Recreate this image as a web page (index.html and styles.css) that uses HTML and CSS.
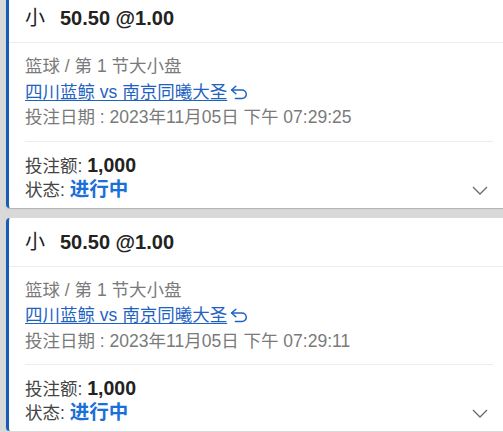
FILE: index.html
```html
<!DOCTYPE html>
<html lang="zh">
<head>
<meta charset="utf-8">
<link rel="stylesheet" href="styles.css">
</head>
<body>
<div class="list">
  <div class="card">
    <div class="card-head"><span class="side">小</span><span class="line">50.50 @1.00</span></div>
    <div class="card-body">
      <div class="meta">篮球 / 第 1 节大小盘</div>
      <div class="match"><a class="link">四川蓝鲸 vs 南京同曦大圣</a><svg class="ret" width="18" height="15" viewBox="0 0 18 15"><path d="M5.8 1.2 L1.6 5 L5.8 8.8" /><path d="M1.9 5 H12 A4.3 4.3 0 0 1 12 13.6 H5.4" /></svg></div>
      <div class="meta">投注日期 : 2023年11月05日 下午 07:29:25</div>
    </div>
    <div class="card-foot">
      <div class="rows">
        <div class="row">投注额: <b class="amt">1,000</b></div>
        <div class="row">状态: <b class="status">进行中</b></div>
      </div>
      <svg class="chev" width="16" height="9" viewBox="0 0 16 9"><path d="M1 1 L8 8 L15 1" /></svg>
    </div>
  </div>
  <div class="card">
    <div class="card-head"><span class="side">小</span><span class="line">50.50 @1.00</span></div>
    <div class="card-body">
      <div class="meta">篮球 / 第 1 节大小盘</div>
      <div class="match"><a class="link">四川蓝鲸 vs 南京同曦大圣</a><svg class="ret" width="18" height="15" viewBox="0 0 18 15"><path d="M5.8 1.2 L1.6 5 L5.8 8.8" /><path d="M1.9 5 H12 A4.3 4.3 0 0 1 12 13.6 H5.4" /></svg></div>
      <div class="meta">投注日期 : 2023年11月05日 下午 07:29:11</div>
    </div>
    <div class="card-foot">
      <div class="rows">
        <div class="row">投注额: <b class="amt">1,000</b></div>
        <div class="row">状态: <b class="status">进行中</b></div>
      </div>
      <svg class="chev" width="16" height="9" viewBox="0 0 16 9"><path d="M1 1 L8 8 L15 1" /></svg>
    </div>
  </div>
</div>
</body>
</html>
```
FILE: styles.css
```css
html, body {
  margin: 0;
  padding: 0;
  overflow: hidden;
  background: #d9d9d9;
}
body {
  font-family: "Liberation Sans", "Noto Sans CJK SC", sans-serif;
  color: #222;
}
.list {
  margin-top: -6px;
  padding-left: 6px;
  width: 503px;
  display: flex;
  flex-direction: column;
  gap: 10px;
}
.card {
  background: #fff;
  border-left: 3px solid #1a5cb5;
  border-radius: 4px;
  box-shadow: 0 1px 1px rgba(0,0,0,0.18);
}
.card-head {
  padding: 12px 16px 12px 16px;
  height: 24px;
  line-height: 24px;
  font-size: 20px;
  font-weight: bold;
  color: #222;
  border-bottom: 1px solid #ededed;
  display: flex;
  align-items: center;
}
.side {
  margin-right: 15px;
  font-weight: normal;
  color: #1e1e1e;
}
.card-body {
  margin: 0 16px;
  padding: 11px 0 10px;
  border-bottom: 1px solid #ececec;
  font-size: 17.5px;
  line-height: 25.5px;
}
.meta {
  color: #7a7a7a;
  height: 25.5px;
}
.match {
  display: flex;
  align-items: center;
  height: 25.5px;
}
.link {
  color: #1f63c2;
  text-decoration: underline;
  text-underline-offset: 2px;
}
.ret {
  margin-left: 3px;
  fill: none;
  stroke: #1f63c2;
  stroke-width: 1.5;
  stroke-linecap: round;
  stroke-linejoin: round;
}
.card-foot {
  margin: 0 16px;
  padding: 12px 0 6px;
  display: flex;
  align-items: flex-end;
  justify-content: space-between;
}
.row {
  font-size: 17.5px;
  line-height: 24px;
  height: 24px;
  color: #444;
}
.amt {
  font-size: 19.5px;
  line-height: 1;
  color: #222;
}
.status {
  font-size: 19.5px;
  line-height: 1;
  color: #1a6fd8;
}
.chev {
  margin-right: 5px;
  margin-bottom: 7px;
  fill: none;
  stroke: #6a6a6a;
  stroke-width: 1.3;
}
```
